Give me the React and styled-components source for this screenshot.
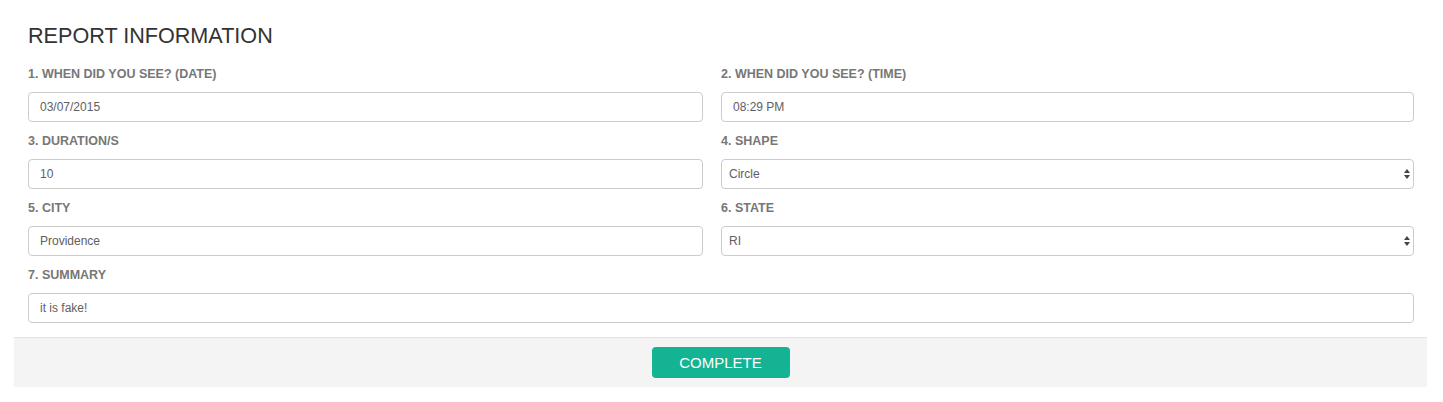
import React, { useState } from 'react'
import styled, { createGlobalStyle } from 'styled-components'

const GlobalStyle = createGlobalStyle`
    body {
        margin: 0;
        background: #fff;
        font-family: "Liberation Sans", Arial, sans-serif;
    }
`;

const fields = [
    { name: 'date', label: '1. WHEN DID YOU SEE? (DATE)', value: '03/07/2015' },
    { name: 'time', label: '2. WHEN DID YOU SEE? (TIME)', value: '08:29 PM' },
    { name: 'duration', label: '3. DURATION/S', value: '10' },
    { name: 'shape', label: '4. SHAPE', value: 'Circle', options: ['Circle', 'Disk', 'Light', 'Triangle', 'Other'] },
    { name: 'city', label: '5. CITY', value: 'Providence' },
    { name: 'state', label: '6. STATE', value: 'RI', options: ['RI', 'MA', 'CT', 'NY'] },
    { name: 'summary', label: '7. SUMMARY', value: 'it is fake!', wide: true },
]

function SelectArrows() {
    return (
        <svg width="6" height="10" viewBox="0 0 6 10">
            <path d="M3 0 L6 4 L0 4 Z" fill="#444" />
            <path d="M3 10 L6 6 L0 6 Z" fill="#444" />
        </svg>
    )
}

function ReportForm() {
    const [inputState, setInputState] = useState(
        Object.fromEntries(fields.map(f => [f.name, f.value]))
    )

    const handleInput = name => e => {
        setInputState({ ...inputState, [name]: e.target.value })
    }

    return (
        <Wrapper>
            <FormStyled onSubmit={e => e.preventDefault()}>
                <Title>REPORT INFORMATION</Title>
                <Grid>
                    {fields.map(f => (
                        <Field key={f.name} $wide={f.wide}>
                            <Label htmlFor={f.name}>{f.label}</Label>
                            {f.options ? (
                                <SelectWrap>
                                    <Select id={f.name} value={inputState[f.name]} onChange={handleInput(f.name)}>
                                        {f.options.map(o => <option key={o}>{o}</option>)}
                                    </Select>
                                    <Arrows><SelectArrows /></Arrows>
                                </SelectWrap>
                            ) : (
                                <Input
                                    id={f.name}
                                    type="text"
                                    value={inputState[f.name]}
                                    onChange={handleInput(f.name)}
                                />
                            )}
                        </Field>
                    ))}
                </Grid>
            </FormStyled>
            <Footer>
                <SubmitButton type="button">COMPLETE</SubmitButton>
            </Footer>
        </Wrapper>
    )
}

const Wrapper = styled.div`
    padding: 0 16px 0 14px;
`;

const FormStyled = styled.form`
    padding: 24px 13px 14px 14px;
`;

const Title = styled.h2`
    margin: 0 0 19px;
    font-family: "Liberation Sans", Arial, sans-serif;
    font-weight: normal;
    font-size: 21.6px;
    line-height: 24px;
    color: #333;
`;

const Grid = styled.div`
    display: grid;
    grid-template-columns: 675px 1fr;
    column-gap: 18px;
    row-gap: 12px;
`;

const Field = styled.div`
    display: flex;
    flex-direction: column;
    grid-column: ${p => p.$wide ? '1 / -1' : 'auto'};
`;

const Label = styled.label`
    font-size: 12.5px;
    font-weight: bold;
    color: #777;
    line-height: 15px;
    margin-bottom: 10px;
`;

const Input = styled.input`
    box-sizing: border-box;
    width: 100%;
    height: 30px;
    padding: 0 11px;
    font-family: inherit;
    font-size: 12px;
    color: #606060;
    border: 1px solid #ccc;
    border-radius: 4px;
    background: #fff;
    outline: none;
`;

const SelectWrap = styled.div`
    position: relative;
`;

const Select = styled.select`
    box-sizing: border-box;
    width: 100%;
    height: 30px;
    padding: 0 7px;
    font-family: inherit;
    font-size: 12px;
    color: #606060;
    border: 1px solid #ccc;
    border-radius: 4px;
    background: #fff;
    outline: none;
    appearance: none;
`;

const Arrows = styled.span`
    position: absolute;
    right: 4px;
    top: 10px;
    display: flex;
    pointer-events: none;
`;

const Footer = styled.div`
    display: flex;
    justify-content: center;
    align-items: center;
    height: 50px;
    background: #f4f4f4;
    border-top: 1px solid #e2e2e2;
    box-sizing: border-box;
`;

const SubmitButton = styled.button`
    width: 138px;
    height: 31px;
    border: none;
    border-radius: 4px;
    background: #14b394;
    color: #fff;
    font-family: "Liberation Sans", Arial, sans-serif;
    font-size: 15px;
    cursor: pointer;
`;

export default function App() {
    return (
        <>
            <GlobalStyle />
            <ReportForm />
        </>
    )
}
